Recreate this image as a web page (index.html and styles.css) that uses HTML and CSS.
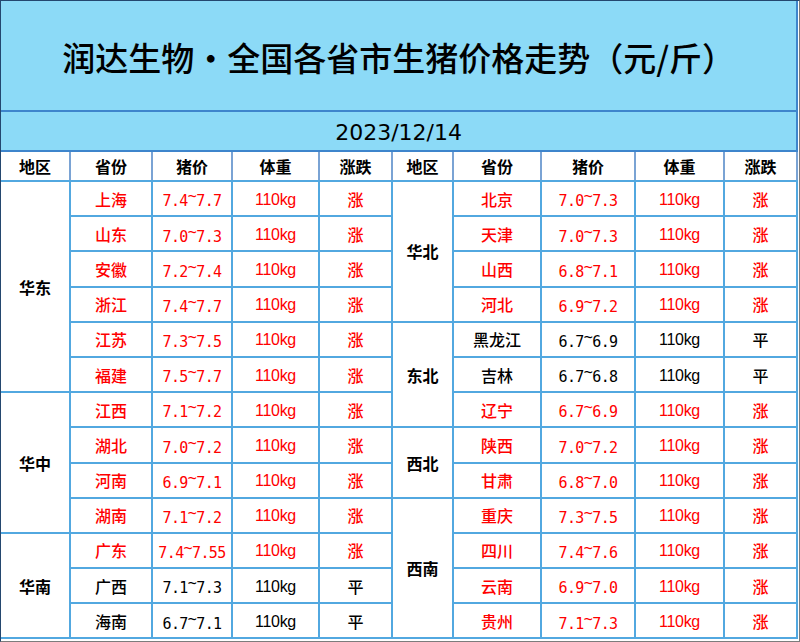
FILE: index.html
```html
<!DOCTYPE html>
<html lang="zh-CN">
<head>
<meta charset="utf-8">
<title>润达生物·全国各省市生猪价格走势</title>
<link rel="stylesheet" href="styles.css">
</head>
<body>
<div class="frame">
<table class="prices">
  <colgroup>
    <col class="w69"><col class="w82"><col class="w80"><col class="w87"><col class="w73">
    <col class="w61"><col class="w88"><col class="w94"><col class="w89"><col class="w73">
  </colgroup>
  <tr class="title-row"><td colspan="10" class="title">润达生物·全国各省市生猪价格走势（元/斤）</td></tr>
  <tr class="date-row"><td colspan="10" class="date">2023/12/14</td></tr>
  <tr class="head">
    <th>地区</th><th>省份</th><th>猪价</th><th>体重</th><th>涨跌</th>
    <th>地区</th><th>省份</th><th>猪价</th><th>体重</th><th>涨跌</th>
  </tr>
  <tr>
    <td class="region" rowspan="6">华东</td>
    <td class="prov up">上海</td><td class="rng up">7.4<span class="tl">~</span>7.7</td><td class="wt up">110kg</td><td class="chg up">涨</td>
    <td class="region" rowspan="4">华北</td>
    <td class="prov up">北京</td><td class="rng up">7.0<span class="tl">~</span>7.3</td><td class="wt up">110kg</td><td class="chg up">涨</td>
  </tr>
  <tr>
    <td class="prov up">山东</td><td class="rng up">7.0<span class="tl">~</span>7.3</td><td class="wt up">110kg</td><td class="chg up">涨</td>
    <td class="prov up">天津</td><td class="rng up">7.0<span class="tl">~</span>7.3</td><td class="wt up">110kg</td><td class="chg up">涨</td>
  </tr>
  <tr>
    <td class="prov up">安徽</td><td class="rng up">7.2<span class="tl">~</span>7.4</td><td class="wt up">110kg</td><td class="chg up">涨</td>
    <td class="prov up">山西</td><td class="rng up">6.8<span class="tl">~</span>7.1</td><td class="wt up">110kg</td><td class="chg up">涨</td>
  </tr>
  <tr>
    <td class="prov up">浙江</td><td class="rng up">7.4<span class="tl">~</span>7.7</td><td class="wt up">110kg</td><td class="chg up">涨</td>
    <td class="prov up">河北</td><td class="rng up">6.9<span class="tl">~</span>7.2</td><td class="wt up">110kg</td><td class="chg up">涨</td>
  </tr>
  <tr>
    <td class="prov up">江苏</td><td class="rng up">7.3<span class="tl">~</span>7.5</td><td class="wt up">110kg</td><td class="chg up">涨</td>
    <td class="region" rowspan="3">东北</td>
    <td class="prov">黑龙江</td><td class="rng">6.7<span class="tl">~</span>6.9</td><td class="wt">110kg</td><td class="chg">平</td>
  </tr>
  <tr>
    <td class="prov up">福建</td><td class="rng up">7.5<span class="tl">~</span>7.7</td><td class="wt up">110kg</td><td class="chg up">涨</td>
    <td class="prov">吉林</td><td class="rng">6.7<span class="tl">~</span>6.8</td><td class="wt">110kg</td><td class="chg">平</td>
  </tr>
  <tr>
    <td class="region" rowspan="4">华中</td>
    <td class="prov up">江西</td><td class="rng up">7.1<span class="tl">~</span>7.2</td><td class="wt up">110kg</td><td class="chg up">涨</td>
    <td class="prov up">辽宁</td><td class="rng up">6.7<span class="tl">~</span>6.9</td><td class="wt up">110kg</td><td class="chg up">涨</td>
  </tr>
  <tr>
    <td class="prov up">湖北</td><td class="rng up">7.0<span class="tl">~</span>7.2</td><td class="wt up">110kg</td><td class="chg up">涨</td>
    <td class="region" rowspan="2">西北</td>
    <td class="prov up">陕西</td><td class="rng up">7.0<span class="tl">~</span>7.2</td><td class="wt up">110kg</td><td class="chg up">涨</td>
  </tr>
  <tr>
    <td class="prov up">河南</td><td class="rng up">6.9<span class="tl">~</span>7.1</td><td class="wt up">110kg</td><td class="chg up">涨</td>
    <td class="prov up">甘肃</td><td class="rng up">6.8<span class="tl">~</span>7.0</td><td class="wt up">110kg</td><td class="chg up">涨</td>
  </tr>
  <tr>
    <td class="prov up">湖南</td><td class="rng up">7.1<span class="tl">~</span>7.2</td><td class="wt up">110kg</td><td class="chg up">涨</td>
    <td class="region" rowspan="4">西南</td>
    <td class="prov up">重庆</td><td class="rng up">7.3<span class="tl">~</span>7.5</td><td class="wt up">110kg</td><td class="chg up">涨</td>
  </tr>
  <tr>
    <td class="region" rowspan="3">华南</td>
    <td class="prov up">广东</td><td class="rng up">7.4<span class="tl">~</span>7.55</td><td class="wt up">110kg</td><td class="chg up">涨</td>
    <td class="prov up">四川</td><td class="rng up">7.4<span class="tl">~</span>7.6</td><td class="wt up">110kg</td><td class="chg up">涨</td>
  </tr>
  <tr>
    <td class="prov">广西</td><td class="rng">7.1<span class="tl">~</span>7.3</td><td class="wt">110kg</td><td class="chg">平</td>
    <td class="prov up">云南</td><td class="rng up">6.9<span class="tl">~</span>7.0</td><td class="wt up">110kg</td><td class="chg up">涨</td>
  </tr>
  <tr>
    <td class="prov">海南</td><td class="rng">6.7<span class="tl">~</span>7.1</td><td class="wt">110kg</td><td class="chg">平</td>
    <td class="prov up">贵州</td><td class="rng up">7.1<span class="tl">~</span>7.3</td><td class="wt up">110kg</td><td class="chg up">涨</td>
  </tr>
</table>
</div>
</body>
</html>
```

FILE: styles.css
```css
html, body {
  margin: 0;
  padding: 0;
  background: #ffffff;
}

.frame {
  box-sizing: border-box;
  width: 800px;
  height: 642px;
  border-top: 1px solid #24476f;
  border-left: 1px solid #24476f;
  border-right: 1px solid #7c7c7c;
  border-bottom: 1px solid #7c7c7c;
  overflow: hidden;
  font-family: "Noto Sans CJK SC", "Noto Sans", sans-serif;
  color: #000000;
}

.prices {
  border-collapse: collapse;
  table-layout: fixed;
  width: 797px;
}

.w69 { width: 69px; }
.w82 { width: 82px; }
.w80 { width: 80px; }
.w87 { width: 87px; }
.w73 { width: 73px; }
.w61 { width: 61px; }
.w88 { width: 88px; }
.w94 { width: 94px; }
.w89 { width: 89px; }

.prices td,
.prices th {
  padding: 0;
  text-align: center;
  vertical-align: middle;
  border: 2px solid #52a8e0;
  white-space: nowrap;
  overflow: hidden;
}

.prices .title {
  background: #8cdaf7;
  border-top: none;
  border-left: none;
  border-right: 2px solid #3e85cc;
  border-bottom: 2px solid #3e85cc;
  font-size: 33px;
  font-weight: 500;
  padding-top: 2px;
}

.prices .date {
  background: #8cdaf7;
  border-left: none;
  border-right: 2px solid #3e85cc;
  border-bottom: 2px solid #3e85cc;
  font-family: "DejaVu Sans", sans-serif;
  font-size: 22px;
  padding-top: 3px;
}

.prices .head th {
  font-size: 16px;
  font-weight: 700;
  border-top-color: #3e85cc;
  border-left-color: #7aa3d4;
  border-right-color: #7aa3d4;
  border-bottom-color: #52a8e0;
}

.prices .head th:first-child {
  border-left: none;
}

.prices tr {
  height: 35.2px;
}

.prices .title-row { height: 110px; }
.prices .date-row { height: 40px; }
.prices .head { height: 30px; }

.prices td.region {
  font-size: 16px;
  font-weight: 700;
}

.prices tr td.region:first-child,
.prices tr td.prov:first-child {
  border-left: none;
}

.prov {
  font-size: 16px;
  font-weight: 500;
}

.rng {
  font-family: "DejaVu Sans Mono", "Liberation Mono", monospace;
  font-size: 15px;
  letter-spacing: -0.6px;
}

.tl {
  vertical-align: 0.3em;
}

.prices td.wt {
  font-family: "Liberation Sans", Arial, sans-serif;
  font-size: 16px;
  letter-spacing: -0.3px;
  padding-top: 2px;
}

.chg {
  font-size: 16px;
  font-weight: 500;
}

.up {
  color: #ff0000;
}
```
